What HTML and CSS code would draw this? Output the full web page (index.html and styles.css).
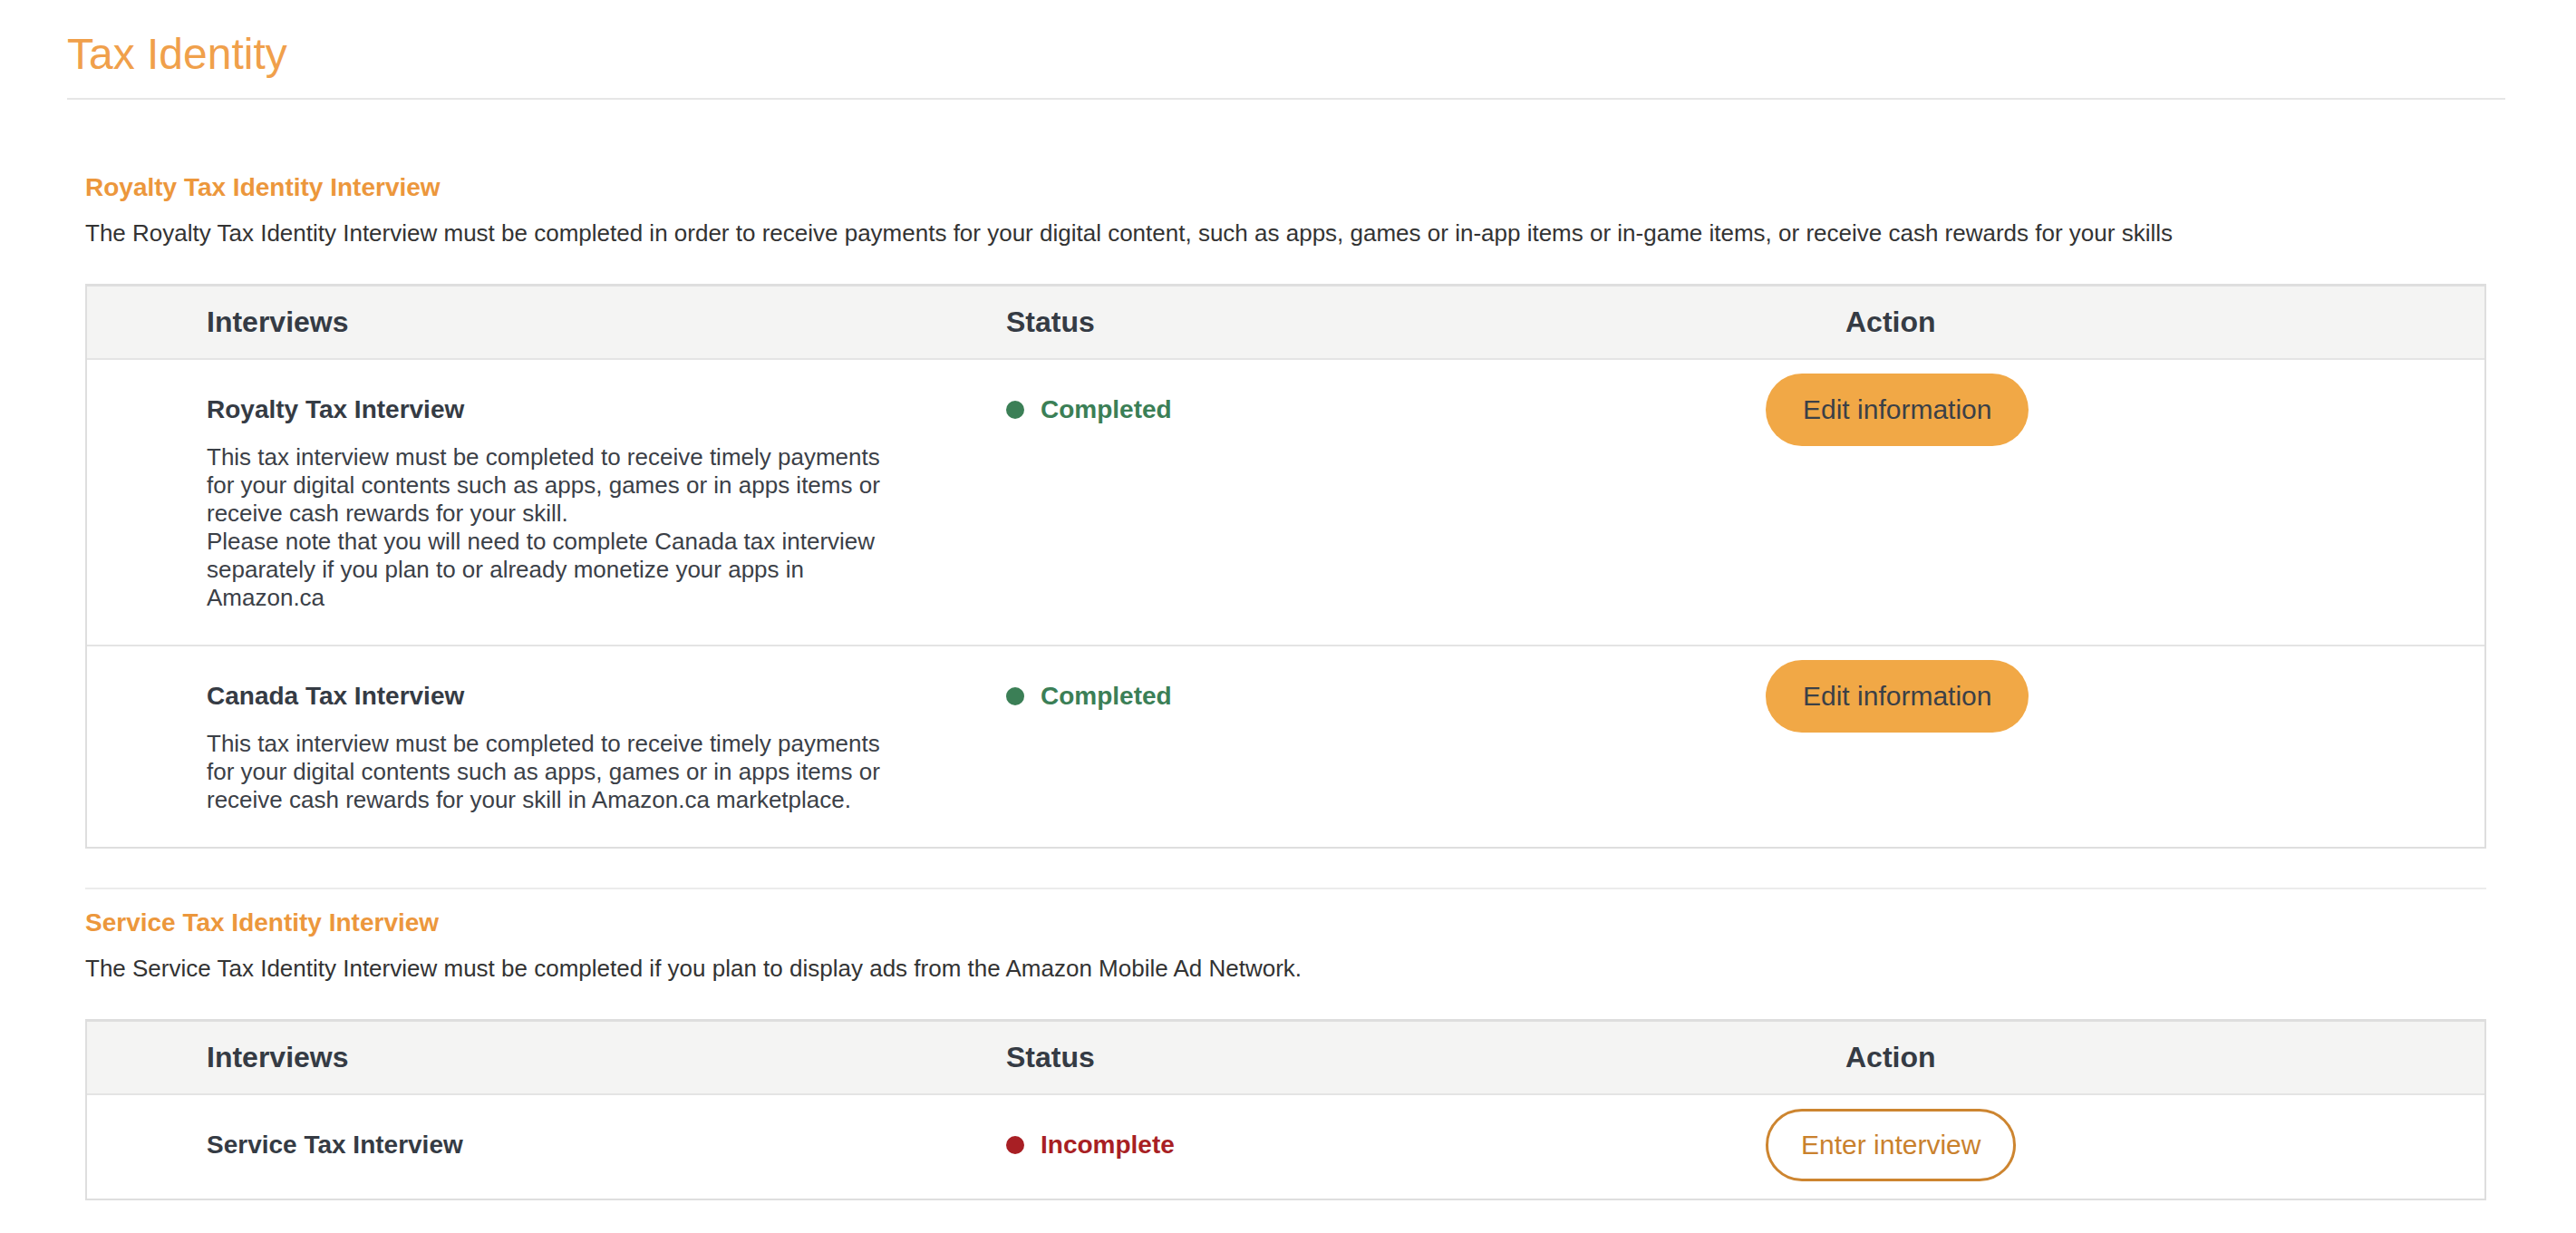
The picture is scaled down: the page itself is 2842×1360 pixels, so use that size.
FILE: index.html
```html
<!DOCTYPE html>
<html lang="en">
<head>
  <meta charset="UTF-8" />
  <meta name="viewport" content="width=device-width, initial-scale=1.0" />
  <title>Tax Identity</title>
  <link rel="stylesheet" href="styles.css">
</head>
<body>
  <div class="page">
    <div class="page-header">
      <h1>Tax Identity</h1>
    </div>

    <div class="section">
      <h3>Royalty Tax Identity Interview</h3>
      <p class="section-desc">The Royalty Tax Identity Interview must be completed in order to receive payments for your digital content, such as apps, games or in-app items or in-game items, or receive cash rewards for your skills</p>

      <div class="interviews">
        <div class="row head">
          <div class="col-name">Interviews</div>
          <div class="col-status">Status</div>
          <div class="col-action">Action</div>
        </div>
        <div class="row">
          <div class="col-name">
            <div class="name">Royalty Tax Interview</div>
            <p class="desc">This tax interview must be completed to receive timely payments for your digital contents such as apps, games or in apps items or receive cash rewards for your skill.<br>Please note that you will need to complete Canada tax interview separately if you plan to or already monetize your apps in Amazon.ca</p>
          </div>
          <div class="col-status"><span class="status done"><i class="dot"></i>Completed</span></div>
          <div class="col-action"><button class="btn">Edit information</button></div>
        </div>
        <div class="row">
          <div class="col-name">
            <div class="name">Canada Tax Interview</div>
            <p class="desc">This tax interview must be completed to receive timely payments for your digital contents such as apps, games or in apps items or receive cash rewards for your skill in Amazon.ca marketplace.</p>
          </div>
          <div class="col-status"><span class="status done"><i class="dot"></i>Completed</span></div>
          <div class="col-action"><button class="btn">Edit information</button></div>
        </div>
      </div>
    </div>

    <div class="section">
      <h3>Service Tax Identity Interview</h3>
      <p class="section-desc">The Service Tax Identity Interview must be completed if you plan to display ads from the Amazon Mobile Ad Network.</p>

      <div class="interviews">
        <div class="row head">
          <div class="col-name">Interviews</div>
          <div class="col-status">Status</div>
          <div class="col-action">Action</div>
        </div>
        <div class="row">
          <div class="col-name">
            <div class="name">Service Tax Interview</div>
          </div>
          <div class="col-status"><span class="status todo"><i class="dot"></i>Incomplete</span></div>
          <div class="col-action"><button class="btn btn-outline">Enter interview</button></div>
        </div>
      </div>
    </div>
  </div>
</body>
</html>
```

FILE: styles.css
```css
body { margin: 0; font-family: "Liberation Sans", Arial, sans-serif; background: #fff; color: #333; }
.page { padding: 0 78px 0 74px; }

.page-header { padding: 32px 0 20px; border-bottom: 2px solid #e6e6e6; }
.page-header h1 { margin: 0; font-size: 48px; line-height: 56px; font-weight: normal; color: #f0a04b; }

.section { margin: 60px 21px 0 20px; padding-top: 20px; }
.section + .section { margin-top: 43px; border-top: 2px solid #ececec; }
.section h3 { margin: 0; font-size: 28px; line-height: 34px; font-weight: bold; color: #ec973c; }
.section-desc { margin: 18px 0 41px; font-size: 26px; line-height: 30px; color: #333; }

.interviews { border: 2px solid #dedede; border-top-width: 3px; }
.row { display: grid; grid-template-columns: 1014px 838px 1fr; padding: 15px 0 19px; border-top: 2px solid #e4e4e4; color: #3b4047; }
.row.head { padding: 0; border-top: none; background: #f4f4f3; font-size: 32px; line-height: 79px; font-weight: bold; color: #353b44; }
.col-name { padding-left: 132px; }
.row.head .col-action { padding-left: 88px; }

.name { font-size: 28px; line-height: 80px; font-weight: bold; color: #353b44; }
.desc { margin: -3px 0 17px; max-width: 765px; font-size: 26px; line-height: 31px; color: #3b4047; }

.status { display: inline-flex; align-items: center; gap: 18px; font-size: 28px; line-height: 80px; font-weight: bold; }
.status .dot { width: 20px; height: 20px; border-radius: 50%; background: currentColor; }
.status.done { color: #3b7f56; }
.status.todo { color: #a81f24; }

.btn { height: 80px; padding: 0 41px; border: none; border-radius: 40px; background: #f1a846; color: #3b4047; font-family: inherit; font-size: 30px; cursor: pointer; }
.btn:hover { background: #eb9d33; }
.btn-outline { padding: 0 36px; border: 3px solid #cd8530; background: #fff; color: #c9812d; }
.btn-outline:hover { background: #fdf5ea; }
```
